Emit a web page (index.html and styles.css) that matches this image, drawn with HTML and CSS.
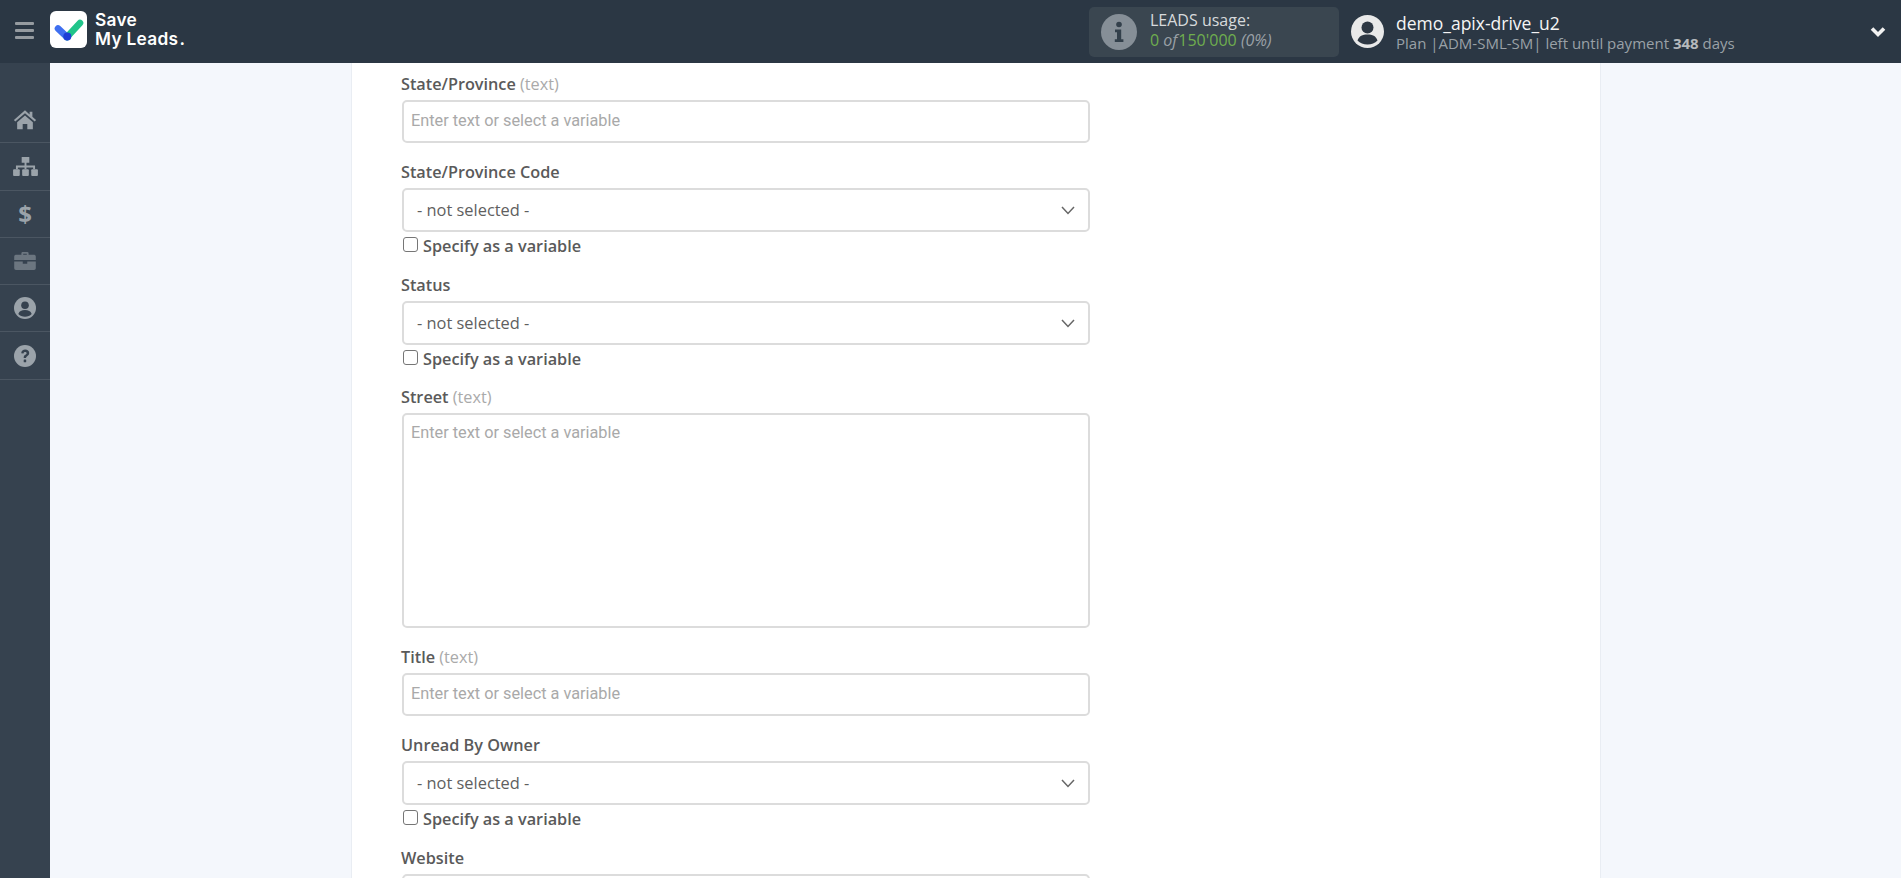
FILE: index.html
```html
<!DOCTYPE html>
<html lang="en">
<head>
<meta charset="utf-8">
<title>Save My Leads</title>
<link rel="stylesheet" href="styles.css">
</head>
<body>
<header class="topbar">
  <div class="burger" aria-label="Menu"><span></span><span></span><span></span></div>
  <div class="logo-mark">
    <svg viewBox="0 0 36 36" width="36" height="36">
      <path d="M7 16.500 L16 25" stroke="#3f6ff0" stroke-width="6.600" stroke-linecap="round" fill="none"/>
      <path d="M16 25 L29 11" stroke="#20c48a" stroke-width="6.600" stroke-linecap="round" fill="none"/>
      <circle cx="16.300" cy="24.400" r="4" fill="#1f3ed6"/>
    </svg>
  </div>
  <div class="logo-text">Save<br>My Leads<span class="logo-dot">.</span></div>
  <div class="usage">
    <div class="usage-icon">
      <svg viewBox="0 0 36 36" width="36" height="36"><circle cx="18" cy="18" r="18" fill="#868f97"/><circle cx="18" cy="10.500" r="2.800" fill="#33404b"/><path d="M14 15.500h6.200v9.800h2.200v2.700h-8.600v-2.700h2.200v-7.100h-2z" fill="#33404b"/></svg>
    </div>
    <div class="usage-text">
      <div class="usage-title">LEADS usage:</div>
      <div class="usage-count"><span class="green">0</span> <i class="of">of</i><span class="green">150'000</span> <i>(0%)</i></div>
    </div>
  </div>
  <svg class="avatar" viewBox="0 0 33 33" width="33" height="33"><circle cx="16.500" cy="16.500" r="16.500" fill="#e9e9e9"/><circle cx="16.500" cy="12.500" r="6" fill="#2d3743"/><path d="M6.500 25.500c1.500-4.500 5-6 10-6s8.500 1.500 10 6c-2.500 2.500-6 4-10 4s-7.500-1.500-10-4z" fill="#2d3743"/></svg>
  <div class="user">
    <div class="user-name">demo_apix-drive_u2</div>
    <div class="user-plan">Plan |ADM-SML-SM| left until payment <b>348</b> days</div>
  </div>
  <svg class="caret" viewBox="0 0 16 12" width="16" height="12"><path d="M2 2.500 L8 8.500 L14 2.500" fill="none" stroke="#f2f2f2" stroke-width="3.600"/></svg>
</header>
<div class="body-row">
  <nav class="sidebar">
    <div class="nav-item"><svg viewBox="0 0 26 22" width="24" height="21"><path d="M13 1 L1 11.500 l1.500 1.800 L13 4.300 l10.500 9 1.500-1.800-4-3.500V2.500h-3v3z" fill="#9ba3aa"/><path d="M4.500 14 L13 6.800 21.500 14v7.500h-6v-5.500h-5v5.500h-6z" fill="#9ba3aa"/></svg></div>
    <div class="nav-item"><svg viewBox="0 0 28 22" width="27" height="21"><path d="M10 1h8v6h-3v3h9v4h-2v-2h-7v2h-2v-2H6v2H4v-4h9V7h-3z" fill="#9ba3aa"/><rect x="1" y="14" width="7" height="7" rx="1" fill="#9ba3aa"/><rect x="10.500" y="14" width="7" height="7" rx="1" fill="#9ba3aa"/><rect x="20" y="14" width="7" height="7" rx="1" fill="#9ba3aa"/></svg></div>
    <div class="nav-item"><span class="dollar">$</span></div>
    <div class="nav-item"><svg viewBox="0 0 24 20" width="22" height="18"><path d="M8 3V1.500A1.500 1.500 0 0 1 9.500 0h5A1.500 1.500 0 0 1 16 1.500V3h6a2 2 0 0 1 2 2v4H0V5a2 2 0 0 1 2-2zm2 0h4V2h-4z" fill="#6c7680" fill-rule="evenodd"/><path d="M0 10.500h9.500V13h5v-2.500H24V18a2 2 0 0 1-2 2H2a2 2 0 0 1-2-2z" fill="#6c7680"/></svg></div>
    <div class="nav-item"><svg viewBox="0 0 22 22" width="22" height="22"><circle cx="11" cy="11" r="11" fill="#9ba3aa"/><circle cx="11" cy="8.300" r="3.800" fill="#36424f"/><path d="M4.300 17c1-3 3.300-4 6.700-4s5.700 1 6.700 4c-1.700 1.800-4 2.800-6.700 2.800S6 18.800 4.300 17z" fill="#36424f"/></svg></div>
    <div class="nav-item"><svg viewBox="0 0 22 22" width="22" height="22"><circle cx="11" cy="11" r="11" fill="#9ba3aa"/><path d="M7.200 8.300C7.400 5.900 9 4.600 11.200 4.600c2.300 0 4 1.400 4 3.500 0 1.700-1 2.500-2 3.100-.9.600-1.100.9-1.100 1.800H9.700c0-1.700.4-2.500 1.600-3.200.9-.6 1.300-1 1.300-1.600 0-.8-.6-1.300-1.500-1.300-.9 0-1.500.5-1.600 1.500z" fill="#36424f"/><rect x="9.700" y="14.500" width="2.500" height="2.700" rx=".5" fill="#36424f"/></svg></div>
  </nav>
  <main class="content">
    <section class="card">
      <div class="field">
        <label class="label">State/Province <span class="hint">(text)</span></label>
        <div class="input placeholder">Enter text or select a variable</div>
      </div>
      <div class="field">
        <label class="label">State/Province Code</label>
        <div class="select"><span>- not selected -</span><svg class="chev" viewBox="0 0 14 9" width="14" height="9"><path d="M1 1 L7 7.500 L13 1" fill="none" stroke="#666" stroke-width="1.500"/></svg></div>
        <label class="check"><span class="box"></span>Specify as a variable</label>
      </div>
      <div class="field field-tight">
        <label class="label">Status</label>
        <div class="select"><span>- not selected -</span><svg class="chev" viewBox="0 0 14 9" width="14" height="9"><path d="M1 1 L7 7.500 L13 1" fill="none" stroke="#666" stroke-width="1.500"/></svg></div>
        <label class="check"><span class="box"></span>Specify as a variable</label>
      </div>
      <div class="field">
        <label class="label">Street <span class="hint">(text)</span></label>
        <div class="input textarea placeholder">Enter text or select a variable</div>
      </div>
      <div class="field">
        <label class="label">Title <span class="hint">(text)</span></label>
        <div class="input placeholder">Enter text or select a variable</div>
      </div>
      <div class="field">
        <label class="label">Unread By Owner</label>
        <div class="select"><span>- not selected -</span><svg class="chev" viewBox="0 0 14 9" width="14" height="9"><path d="M1 1 L7 7.500 L13 1" fill="none" stroke="#666" stroke-width="1.500"/></svg></div>
        <label class="check"><span class="box"></span>Specify as a variable</label>
      </div>
      <div class="field">
        <label class="label">Website</label>
        <div class="select"></div>
      </div>
    </section>
  </main>
</div>
</body>
</html>
```
FILE: styles.css
```css
* { box-sizing: border-box; }
html, body { margin: 0; height: 100%; overflow: hidden; }
body { font-family: "Open Sans", sans-serif; color: #555; background: #f4f7fc; display: flex; flex-direction: column; height: 878px; }

.topbar { height: 63px; flex: none; background: #2b3744; display: flex; align-items: center; color: #fff; }
.burger { width: 19px; margin-left: 15px; margin-bottom: 2px; display: flex; flex-direction: column; gap: 4px; }
.burger span { display: block; height: 3px; background: #969ba0; border-radius: 1px; }
.logo-mark { width: 37px; height: 37px; margin-left: 16px; margin-bottom: 4px; background: #fff; border-radius: 6px; display: flex; align-items: center; justify-content: center; }
.logo-text { font-family: "Inter", "Open Sans", sans-serif; font-weight: 600; font-size: 17.300px; line-height: 19px; margin-left: 8px; margin-bottom: 5px; letter-spacing: .3px; width: 97px; }
.logo-dot { margin-left: 1px; }
.usage { margin-left: 897px; width: 250px; height: 50px; background: #3a4650; border-radius: 5px; display: flex; align-items: center; padding-left: 12px; }
.usage-icon { height: 36px; }
.usage-text { margin-left: 13px; font-size: 16px; line-height: 20px; color: #d7dadc; margin-top: -3px; }
.usage-count { color: #9aa1a7; }
.usage-count i { font-style: italic; }
.usage-count .of { margin-right: 1px; }
.green { color: #6fae4e; }
.avatar { margin-left: 12px; flex: none; }
.user { margin-left: 12px; padding-top: 2px; }
.user-name { font-size: 17.500px; line-height: 22px; color: #f5f5f5; }
.user-plan { font-size: 15px; line-height: 19px; color: #9aa1a7; }
.user-plan b { font-weight: 700; color: #b5b9bd; }
.caret { margin-left: auto; margin-right: 15px; }

.body-row { flex: 1; display: flex; min-height: 0; }
.sidebar { width: 50px; flex: none; background: #36424f; padding-top: 33px; }
.nav-item { height: 47.300px; border-bottom: 1px solid #4b5662; display: flex; align-items: center; justify-content: center; }
.dollar { font-family: "Open Sans", sans-serif; font-weight: 700; font-size: 24px; color: #9ba3aa; }

.content { flex: 1; min-width: 0; padding-left: 302px; overflow: hidden; }
.card { width: 1248px; height: 100%; background: #fff; box-shadow: 0 0 0 1px #e9edf3; padding: 9px 50px 0; overflow: hidden; }
.field { width: 688px; margin-bottom: 17px; }
.label { display: block; font-weight: 600; font-size: 16.250px; line-height: 24px; height: 28px; color: #5a5a5a; margin-left: -1px; }
.hint { font-weight: 400; color: #aaa; }
.input, .select { border: 2px solid #dcdcdc; border-radius: 5px; background: #fff; width: 688px; }
.input { height: 43px; padding: 0 7px 2px; display: flex; align-items: center; }
.placeholder { font-family: "Roboto", sans-serif; font-size: 16.300px; color: #a9a9a9; }
.textarea { height: 215px; align-items: flex-start; padding-top: 8px; }
.select { height: 44px; padding: 0 14px 2px 13px; display: flex; align-items: center; justify-content: space-between; font-size: 16.400px; color: #5f5f5f; }
.chev { margin: 2px -1px 0 0; }
.check { display: flex; align-items: center; font-weight: 600; font-size: 16.250px; line-height: 24px; height: 25px; margin-top: 1px; color: #5a5a5a; }
.box { width: 15px; height: 15px; border: 1.500px solid #767676; border-radius: 3px; margin: 0 5px 2px 1px; flex: none; background: #fff; }
.field:has(.check) { margin-bottom: 15px; }
.field.field-tight { margin-bottom: 14px; }
```
